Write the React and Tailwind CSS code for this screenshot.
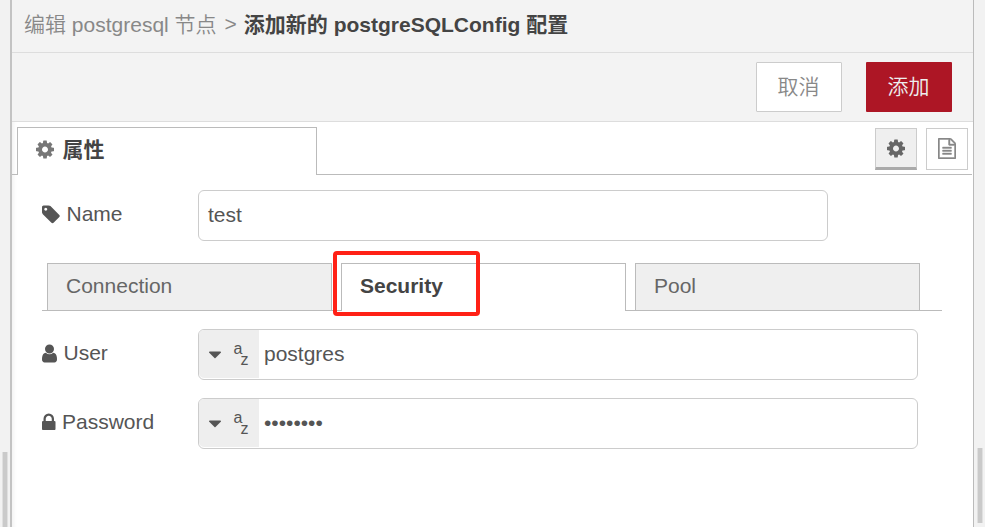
import React from "react";

const PATHS = {
  cog: "M1152 896q0-106-75-181t-181-75-181 75-75 181 75 181 181 75 181-75 75-181zm512-109v222q0 12-8 23t-20 13l-185 28q-19 54-39 91 35 50 107 138 10 12 10 25t-9 23q-27 37-99 108t-94 71q-12 0-26-9l-138-108q-44 23-91 38-16 136-29 186-7 28-36 28h-222q-14 0-24.5-8.5t-11.5-21.5l-28-184q-49-16-90-37l-141 107q-10 9-25 9-14 0-25-11-126-114-165-168-7-10-7-23 0-12 8-23 15-21 51-66.5t54-70.5q-27-50-41-99l-183-27q-13-2-21-12.5t-8-23.5v-222q0-12 8-23t19-13l186-28q14-46 39-92-40-57-107-138-10-12-10-24 0-10 9-23 26-36 98.5-107.5t94.5-71.5q13 0 26 10l138 107q44-23 91-38 16-136 29-186 7-28 36-28h222q14 0 24.5 8.5t11.5 21.5l28 184q49 16 90 37l142-107q9-9 24-9 13 0 25 10 129 119 165 170 7 8 7 22 0 12-8 23-15 21-51 66.5t-54 70.5q26 50 41 98l183 28q13 2 21 12.5t8 23.5z",
  file: "M1596 380q28 28 48 76t20 88v1152q0 40-28 68t-68 28h-1344q-40 0-68-28t-28-68v-1600q0-40 28-68t68-28h896q40 0 88 20t76 48zm-444-244v376h376q-10-29-22-41l-313-313q-12-12-41-22zm384 1528v-1024h-416q-40 0-68-28t-28-68v-416h-768v1536h1280zm-1024-864q0-14 9-23t23-9h704q14 0 23 9t9 23v64q0 14-9 23t-23 9h-704q-14 0-23-9t-9-23v-64zm736 224q14 0 23 9t9 23v64q0 14-9 23t-23 9h-704q-14 0-23-9t-9-23v-64q0-14 9-23t23-9h704zm0 256q14 0 23 9t9 23v64q0 14-9 23t-23 9h-704q-14 0-23-9t-9-23v-64q0-14 9-23t23-9h704z",
  tag: "M576 448q0-53-37.5-90.5t-90.5-37.5-90.5 37.5-37.5 90.5 37.5 90.5 90.5 37.5 90.5-37.5 37.5-90.5zm1067 576q0 53-37 90l-491 492q-39 37-91 37-53 0-90-37l-715-716q-38-37-64.5-101t-26.5-117v-416q0-52 38-90t90-38h416q53 0 117 26.5t102 64.5l715 714q37 39 37 91z",
  user: "M1536 1399q0 109-62.5 187t-150.5 78h-854q-88 0-150.5-78t-62.5-187q0-85 8.5-160.5t31.5-152 58.5-131 94-89 134.5-34.5q131 128 313 128t313-128q76 0 134.5 34.5t94 89 58.5 131 31.5 152 8.5 160.5zm-256-887q0 159-112.5 271.5t-271.5 112.5-271.5-112.5-112.5-271.5 112.5-271.5 271.5-112.5 271.5 112.5 112.5 271.5z",
  lock: "M640 768h512v-192q0-106-75-181t-181-75-181 75-75 181v192zm832 96v576q0 40-28 68t-68 28h-960q-40 0-68-28t-28-68v-576q0-40 28-68t68-28h32v-192q0-184 132-316t316-132 316 132 132 316v192h32q40 0 68 28t28 68z",
  caret: "M1408 704q0 26-19 45l-448 448q-19 19-45 19t-45-19l-448-448q-19-19-19-45t19-45 45-19h896q26 0 45 19t19 45z",
};

const BOXES = {
  cog: "128 0 1536 1792",
  file: "128 0 1536 1792",
  tag: "128 0 1536 1792",
  user: "256 0 1280 1792",
  lock: "320 0 1152 1792",
  caret: "384 0 1024 1792",
};

function Icon({ name, className = "" }) {
  return (
    <svg viewBox={BOXES[name]} className={`h-[21px] w-auto shrink-0 fill-current ${className}`} aria-hidden="true">
      <path d={PATHS[name]} />
    </svg>
  );
}

function Label({ icon, children }) {
  return (
    <div className="flex h-12 w-[156px] shrink-0 items-center gap-[6.5px]">
      <Icon name={icon} />
      <span>{children}</span>
    </div>
  );
}

function TypedField({ children }) {
  return (
    <div className="flex h-[51px] w-[720px] rounded-md border border-[#ccc]">
      <div className="mb-px flex h-12 w-[60px] items-center rounded-l-[5px] bg-[#eee] pl-[9.5px]">
        <Icon name="caret" />
        <span className="relative ml-3 h-full w-5 text-base leading-none">
          <span className="absolute left-px top-[11px]">a</span>
          <span className="absolute left-2 top-[22px]">z</span>
        </span>
      </div>
      <div className="flex items-center pb-[2px] pl-[5px]">{children}</div>
    </div>
  );
}

export default function App() {
  return (
    <div className="flex h-[527px] w-[985px] overflow-hidden bg-[#f2f2f2] font-['Liberation_Sans','Noto_Sans_CJK_SC',sans-serif] text-[21px] leading-[30px] text-[#555]">
      <div className="flex w-[10px] shrink-0 items-end bg-[#f2f2f2]">
        <div className="ml-[2px] h-[75px] w-[6px] border-x border-[#e0e0e0] bg-[#cacaca]" />
      </div>
      <main className="flex w-[964px] shrink-0 flex-col border-l-2 border-r border-l-[#c3c3c3] border-r-[#bbb] bg-white shadow-[inset_6px_0_5px_-5px_rgba(0,0,0,0.07)]">
        <header className="flex h-[53px] shrink-0 items-center border-b border-[#ddd] bg-[#f3f3f3] pb-[3px] pl-3 text-[#888]">
          <span className="font-[350]">编辑 <span className="font-normal">postgresql</span> 节点</span>
          <span className="relative -top-px ml-2 mr-[7px]">&gt;</span>
          <span className="font-bold text-[#444]">添加新的 postgreSQLConfig 配置</span>
        </header>
        <div className="flex h-[69px] shrink-0 items-center justify-end gap-6 border-b border-[#ddd] bg-[#f3f3f3] pr-[21px]">
          <button className="h-[50px] w-[86px] rounded-[1px] border border-[#ccc] bg-white pr-px font-[350] text-[#888]">取消</button>
          <button className="h-[50px] w-[86px] rounded-[1px] bg-[#ad1625] pr-px font-[350] text-[#eee]">添加</button>
        </div>
        <div className="flex h-[53px] shrink-0 items-end">
          <div className="h-full w-[5px] border-b border-[#bbb]" />
          <div className="flex h-12 w-[300px] items-center border-x border-t border-[#bbb] pb-[3px] pl-[17.5px] font-bold text-[#444]">
            <Icon name="cog" className="mb-[2px] text-[#777]" />
            <span className="ml-[9px]">属性</span>
          </div>
          <div className="mr-px flex h-full flex-1 items-start justify-end gap-[9px] border-b border-[#bbb] pr-1 pt-[6px]">
            <button className="flex h-[42px] w-[42px] items-center justify-center border border-b-[3px] border-[#ccc] border-b-[#aaa] bg-[#efefef] pt-px text-[#666]">
              <Icon name="cog" />
            </button>
            <button className="flex h-[42px] w-[42px] items-center justify-center border border-[#ccc] bg-white pb-px text-[#888]">
              <Icon name="file" className="stroke-current stroke-[36]" />
            </button>
          </div>
        </div>
        <section className="pl-[30px] pt-[15px]">
          <div className="flex h-[51px]">
            <Label icon="tag">Name</Label>
            <div className="flex h-[51px] w-[630px] items-center rounded-md border border-[#ccc] pb-[2px] pl-[9px]">test</div>
          </div>
          <div className="mt-[22px] flex h-12 w-[900px] items-end text-[#666]">
            <div className="w-[5px] self-stretch border-b border-[#bbb]" />
            <div className="flex h-12 w-[285px] items-center border border-[#bbb] bg-[#efefef] pb-[2px] pl-[18px]">Connection</div>
            <div className="w-[9px] self-stretch border-b border-[#bbb]" />
            <div className="relative flex h-12 w-[285px] items-center border-x border-t border-[#bbb] pb-[3px] pl-[18px] font-bold text-[#444]">
              Security
              <div className="absolute -left-[9px] -top-[13px] h-[65px] w-[147px] rounded-[4px] border-4 border-[#ff2116]" />
            </div>
            <div className="w-[9px] self-stretch border-b border-[#bbb]" />
            <div className="flex h-12 w-[285px] items-center border border-[#bbb] bg-[#efefef] pb-[2px] pl-[18px]">Pool</div>
            <div className="flex-1 self-stretch border-b border-[#bbb]" />
          </div>
          <div className="mt-[18px] flex flex-col gap-[18px]">
            <div className="flex">
              <Label icon="user">User</Label>
              <TypedField>postgres</TypedField>
            </div>
            <div className="flex">
              <Label icon="lock">Password</Label>
              <TypedField>••••••••</TypedField>
            </div>
          </div>
        </section>
      </main>
      <div className="flex flex-1 items-end pb-1">
        <div className="ml-[3px] h-[75px] w-[6px] border-x border-[#e0e0e0] bg-[#cacaca]" />
      </div>
    </div>
  );
}
